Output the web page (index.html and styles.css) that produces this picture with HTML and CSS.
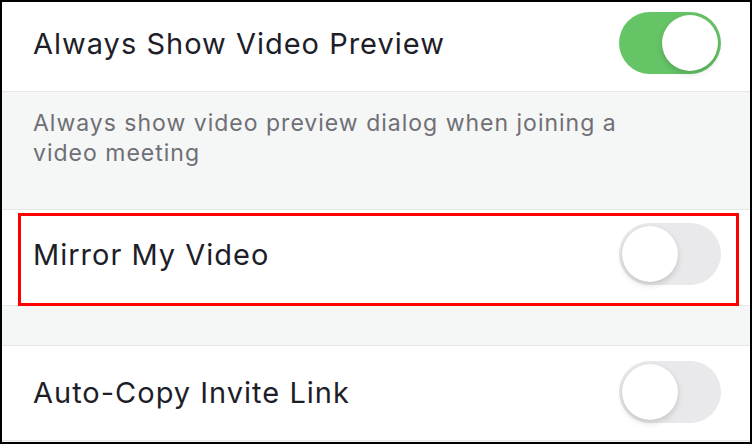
FILE: index.html
```html
<!DOCTYPE html>
<html lang='en'>
<head>
    <meta charset='UTF-8'>
    <meta name='viewport' content='width=device-width, initial-scale=1.0'>
    <title>Video Settings</title>
    <link rel="stylesheet" href="styles.css">
</head>

<body>
    <div class='settings'>
        <div class='setting-row first'>
            <span class='setting-label'>Always Show Video Preview</span>
            <div class='switch on'><div class='knob'></div></div>
        </div>
        <div class='setting-note'>
            Always show video preview dialog when joining a video meeting
        </div>
        <div class='setting-row highlighted'>
            <span class='setting-label'>Mirror My Video</span>
            <div class='switch'><div class='knob'></div></div>
        </div>
        <div class='spacer'></div>
        <div class='setting-row last'>
            <span class='setting-label'>Auto-Copy Invite Link</span>
            <div class='switch'><div class='knob'></div></div>
        </div>
    </div>
</body>

</html>
```

FILE: styles.css
```css
* {
    margin: 0px;
    padding: 0px;
    box-sizing: border-box;
}

body {
    background-color: #fff;
    font-family: Inter, 'Liberation Sans', sans-serif;
    width: 752px;
    height: 444px;
    overflow: hidden;
}

.settings {
    width: 752px;
    height: 444px;
    border: 2px solid #000;
    background-color: #f5f6f6;
    display: flex;
    flex-direction: column;
    overflow: hidden;
}

/* Rows */
.setting-row {
    display: flex;
    justify-content: space-between;
    align-items: center;
    flex-shrink: 0;
    background-color: #fff;
    padding: 0 29px 0 31px;
    border-bottom: 1px solid #e6e7e8;
    position: relative;
}

.setting-row.first {
    padding-top: 10px;
    padding-bottom: 17px;
}

.setting-row.highlighted {
    padding-top: 13px;
    padding-bottom: 20px;
}

.setting-row.last {
    padding-top: 15px;
    padding-bottom: 17px;
}

.setting-label {
    font-size: 29px;
    color: #1e1e29;
    letter-spacing: 1px;
}

.setting-note {
    flex-shrink: 0;
    padding: 16px 100px 0 31px;
    height: 118px;
    font-size: 23px;
    line-height: 30px;
    letter-spacing: 1px;
    color: #6f6f75;
    border-bottom: 1px solid #e6e7e8;
}

.spacer {
    flex-shrink: 0;
    height: 40px;
    border-bottom: 1px solid #e6e7e8;
}

/* Annotation box */
.highlighted::after {
    content: '';
    position: absolute;
    top: 3px;
    left: 16px;
    right: 11px;
    bottom: -1px;
    border: 3px solid #f00;
}

/* Switch */
.switch {
    width: 102px;
    height: 62px;
    border-radius: 31px;
    background-color: #e9e9eb;
    padding: 3px;
    display: flex;
}

.switch.on {
    background-color: #65c466;
    justify-content: flex-end;
}

.knob {
    width: 56px;
    height: 56px;
    border-radius: 50%;
    background-color: #fff;
    box-shadow: 0 3px 6px rgba(0, 0, 0, 0.15), 0 0 1px rgba(0, 0, 0, 0.1);
}
```
